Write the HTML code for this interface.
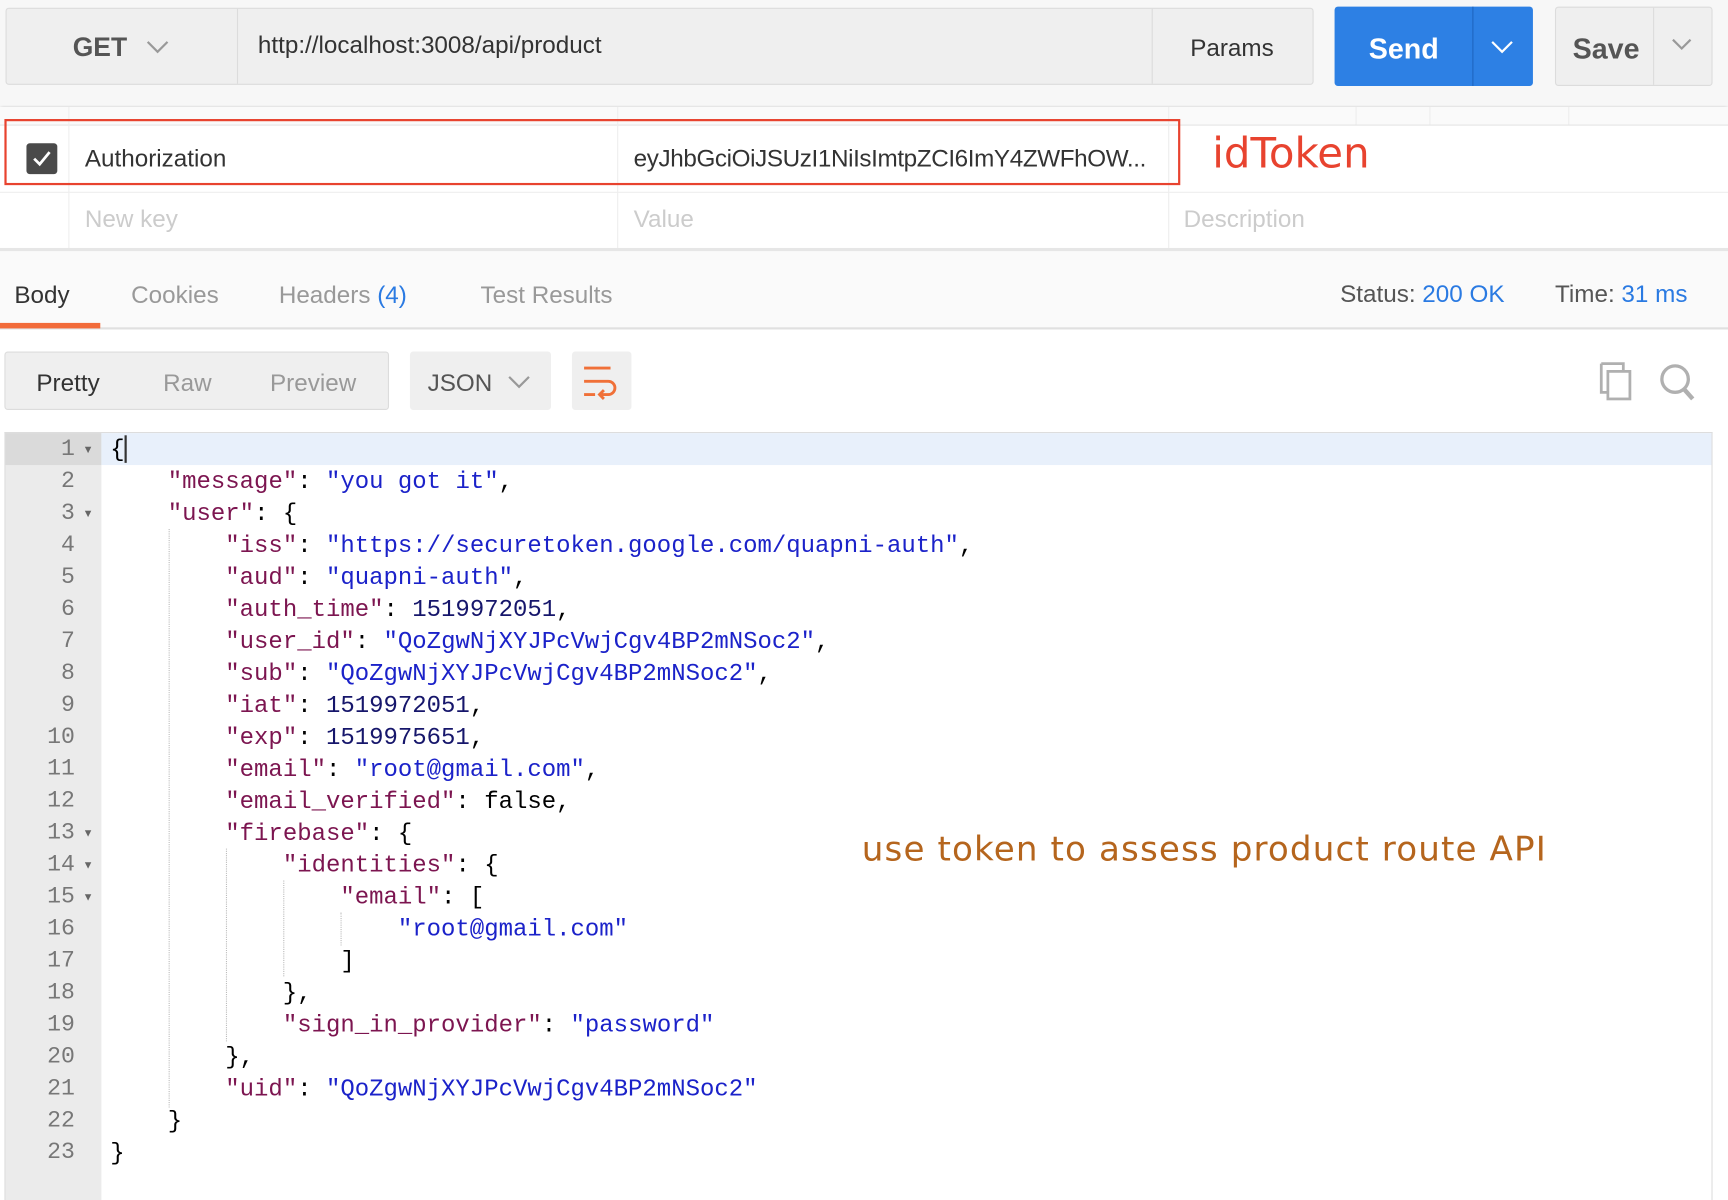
<!DOCTYPE html>
<html><head><meta charset="utf-8"><style>
*{margin:0;padding:0;box-sizing:border-box}
html,body{width:1728px;height:1200px;overflow:hidden;background:#fff}
#r{position:absolute;left:0;top:0;width:1568px;height:1089px;transform:scale(1.10204);transform-origin:0 0;font-family:"Liberation Sans",sans-serif;background:#fff}
.a{position:absolute}
.t{position:absolute;font-size:22px;white-space:nowrap}
.code{position:absolute;left:100px;top:394px;font-family:"Liberation Mono",monospace;font-size:21.75px;line-height:29px;white-space:pre;color:#000}
.k{color:#7c1550}.s{color:#1b22c9}.n{color:#16166b}
.ln{position:absolute;left:4px;width:64px;text-align:right;font-family:"Liberation Mono",monospace;font-size:21px;color:#777;line-height:29px}
.guide{position:absolute;border-left:1px dotted #bbb;width:0}
</style></head><body><div id="r">
<div class="a" style="left:0;top:0;width:1568px;height:96px;background:#f7f7f7;box-shadow:0 2px 4px rgba(0,0,0,.15)"></div>
<div class="a" style="left:5px;top:7px;width:1187px;height:70px;background:#efefef;border:1px solid #dcdcdc;border-radius:3px"></div>
<div class="a" style="left:215px;top:8px;width:1px;height:68px;background:#dcdcdc"></div>
<div class="a" style="left:1045px;top:8px;width:1px;height:68px;background:#dcdcdc"></div>
<div class="t" style="left:66px;top:30px;font-size:24px;color:#555;font-weight:bold">GET</div>
<svg class="a" style="left:132px;top:36px" width="22" height="14"><path d="M2 2l9 9 9-9" fill="none" stroke="#999" stroke-width="2"/></svg>
<div class="t" style="left:234px;top:28px;color:#333">http://localhost:3008/api/product</div>
<div class="t" style="left:1080px;top:31px;color:#333">Params</div>
<div class="a" style="left:1211px;top:6px;width:180px;height:72px;background:#2d80e4;border-radius:3px"></div>
<div class="a" style="left:1336px;top:6px;width:1px;height:72px;background:#1f66c0"></div>
<div class="t" style="left:1242px;top:29px;color:#fff;font-weight:bold;font-size:26px">Send</div>
<svg class="a" style="left:1352px;top:36px" width="22" height="14"><path d="M2 2l9 9 9-9" fill="none" stroke="#fff" stroke-width="2"/></svg>
<div class="a" style="left:1411px;top:6px;width:143px;height:72px;background:#efefef;border:1px solid #dcdcdc;border-radius:3px"></div>
<div class="a" style="left:1500px;top:7px;width:1px;height:70px;background:#dcdcdc"></div>
<div class="t" style="left:1427px;top:29px;color:#555;font-weight:bold;font-size:26px">Save</div>
<svg class="a" style="left:1516px;top:34px" width="20" height="12"><path d="M2 2l8 8 8-8" fill="none" stroke="#999" stroke-width="2"/></svg>
<div class="a" style="left:0;top:97px;width:1568px;height:17px;background:#fafafa;border-bottom:1px solid #e4e4e4"></div>
<div class="a" style="left:62px;top:97px;width:1px;height:128px;background:#eee"></div>
<div class="a" style="left:560px;top:97px;width:1px;height:128px;background:#eee"></div>
<div class="a" style="left:1060px;top:97px;width:1px;height:128px;background:#eee"></div>
<div class="a" style="left:1230px;top:97px;width:1px;height:16px;background:#eee"></div>
<div class="a" style="left:1297px;top:97px;width:1px;height:16px;background:#eee"></div>
<div class="a" style="left:1423px;top:97px;width:1px;height:16px;background:#eee"></div>
<div class="a" style="left:0;top:174px;width:1568px;height:1px;background:#eee"></div>
<div class="a" style="left:4px;top:108px;width:1067px;height:60px;border:2px solid #e8432f"></div>
<div class="a" style="left:24px;top:130px;width:28px;height:28px;background:#4a4a4a;border-radius:3px"></div>
<svg class="a" style="left:27px;top:134px" width="22" height="20"><path d="M4 10l5 5 9-11" fill="none" stroke="#fff" stroke-width="2.5"/></svg>
<div class="t" style="left:77px;top:131px;color:#333">Authorization</div>
<div class="t" style="left:575px;top:131px;color:#333;letter-spacing:-0.35px">eyJhbGciOiJSUzI1NiIsImtpZCI6ImY4ZWFhOW...</div>
<div class="t" style="left:1100px;top:117px;color:#e8432f;font-size:38px;font-family:'DejaVu Sans',sans-serif">idToken</div>
<div class="t" style="left:77px;top:186px;color:#ccc">New key</div>
<div class="t" style="left:575px;top:186px;color:#ccc">Value</div>
<div class="t" style="left:1074px;top:186px;color:#ccc">Description</div>
<div class="a" style="left:0;top:225px;width:1568px;height:3px;background:#e6e6e6"></div>
<div class="a" style="left:0;top:228px;width:1568px;height:71px;background:#fafafa;border-bottom:2px solid #e0e0e0"></div>
<div class="a" style="left:0;top:293px;width:91px;height:5px;background:#f26b3a"></div>
<div class="t" style="left:13px;top:255px;color:#333">Body</div>
<div class="t" style="left:119px;top:255px;color:#999">Cookies</div>
<div class="t" style="left:253px;top:255px;color:#999">Headers <span style="color:#2a7ae2">(4)</span></div>
<div class="t" style="left:436px;top:255px;color:#999">Test Results</div>
<div class="t" style="left:1216px;top:254px;color:#555">Status: <span style="color:#2a7ae2">200 OK</span></div>
<div class="t" style="left:1411px;top:254px;color:#555">Time: <span style="color:#2a7ae2">31 ms</span></div>
<div class="a" style="left:4px;top:319px;width:349px;height:53px;background:#efefef;border:1px solid #dcdcdc;border-radius:3px"></div>
<div class="t" style="left:33px;top:335px;color:#333">Pretty</div>
<div class="t" style="left:148px;top:335px;color:#999">Raw</div>
<div class="t" style="left:245px;top:335px;color:#999">Preview</div>
<div class="a" style="left:372px;top:319px;width:128px;height:53px;background:#efefef;border-radius:3px"></div>
<div class="t" style="left:388px;top:335px;color:#555">JSON</div>
<svg class="a" style="left:460px;top:340px" width="22" height="14"><path d="M2 2l9 9 9-9" fill="none" stroke="#999" stroke-width="2"/></svg>
<div class="a" style="left:519px;top:319px;width:54px;height:53px;background:#efefef;border-radius:3px"></div>
<svg class="a" style="left:519px;top:319px" width="54" height="53"><path d="M11 15h24M11 27h22a6 6 0 0 1 0 12h-8M11 39h10M29 35l-4 4 4 4" fill="none" stroke="#f07038" stroke-width="2.6"/></svg>
<svg class="a" style="left:1450px;top:328px" width="90" height="36"><path d="M3 2h20v6M3 2v26h6" fill="none" stroke="#b0b0b0" stroke-width="2.5"/><rect x="9" y="9" width="20" height="25" fill="none" stroke="#b0b0b0" stroke-width="2.5"/><circle cx="70" cy="16" r="12" fill="none" stroke="#b0b0b0" stroke-width="3"/><path d="M78 25l8 9" stroke="#b0b0b0" stroke-width="4"/></svg>
<div class="a" style="left:4px;top:392px;width:1550px;height:697px;border:1px solid #ddd;border-bottom:none"></div>
<div class="a" style="left:5px;top:393px;width:87px;height:696px;background:#ebebeb"></div>
<div class="a" style="left:5px;top:393px;width:87px;height:29px;background:#dadada"></div>
<div class="a" style="left:92px;top:393px;width:1461px;height:29px;background:#e8f0fb"></div>
<div class="a" style="left:113px;top:395px;width:2px;height:25px;background:#333"></div>
<div class="ln" style="top:394px">1<br>2<br>3<br>4<br>5<br>6<br>7<br>8<br>9<br>10<br>11<br>12<br>13<br>14<br>15<br>16<br>17<br>18<br>19<br>20<br>21<br>22<br>23</div>
<div class="a" style="left:75px;top:394px;font-size:10px;color:#666;line-height:29px">▼<br><br>▼<br><br><br><br><br><br><br><br><br><br>▼<br>▼<br>▼</div>
<div class="guide" style="left:153px;top:480px;height:525px"></div>
<div class="guide" style="left:205px;top:770px;height:175px"></div>
<div class="guide" style="left:257px;top:799px;height:87px"></div>
<div class="guide" style="left:309px;top:828px;height:30px"></div>
<div class="code">{
    <span class="k">"message"</span>: <span class="s">"you got it"</span>,
    <span class="k">"user"</span>: {
        <span class="k">"iss"</span>: <span class="s">"https://securetoken.google.com/quapni-auth"</span>,
        <span class="k">"aud"</span>: <span class="s">"quapni-auth"</span>,
        <span class="k">"auth_time"</span>: <span class="n">1519972051</span>,
        <span class="k">"user_id"</span>: <span class="s">"QoZgwNjXYJPcVwjCgv4BP2mNSoc2"</span>,
        <span class="k">"sub"</span>: <span class="s">"QoZgwNjXYJPcVwjCgv4BP2mNSoc2"</span>,
        <span class="k">"iat"</span>: <span class="n">1519972051</span>,
        <span class="k">"exp"</span>: <span class="n">1519975651</span>,
        <span class="k">"email"</span>: <span class="s">"root@gmail.com"</span>,
        <span class="k">"email_verified"</span>: false,
        <span class="k">"firebase"</span>: {
            <span class="k">"identities"</span>: {
                <span class="k">"email"</span>: [
                    <span class="s">"root@gmail.com"</span>
                ]
            },
            <span class="k">"sign_in_provider"</span>: <span class="s">"password"</span>
        },
        <span class="k">"uid"</span>: <span class="s">"QoZgwNjXYJPcVwjCgv4BP2mNSoc2"</span>
    }
}</div>
<div class="t" style="left:782px;top:753px;color:#b5651d;font-size:31px;font-family:'DejaVu Sans',sans-serif;letter-spacing:1px">use token to assess product route API</div>
</div></body></html>
